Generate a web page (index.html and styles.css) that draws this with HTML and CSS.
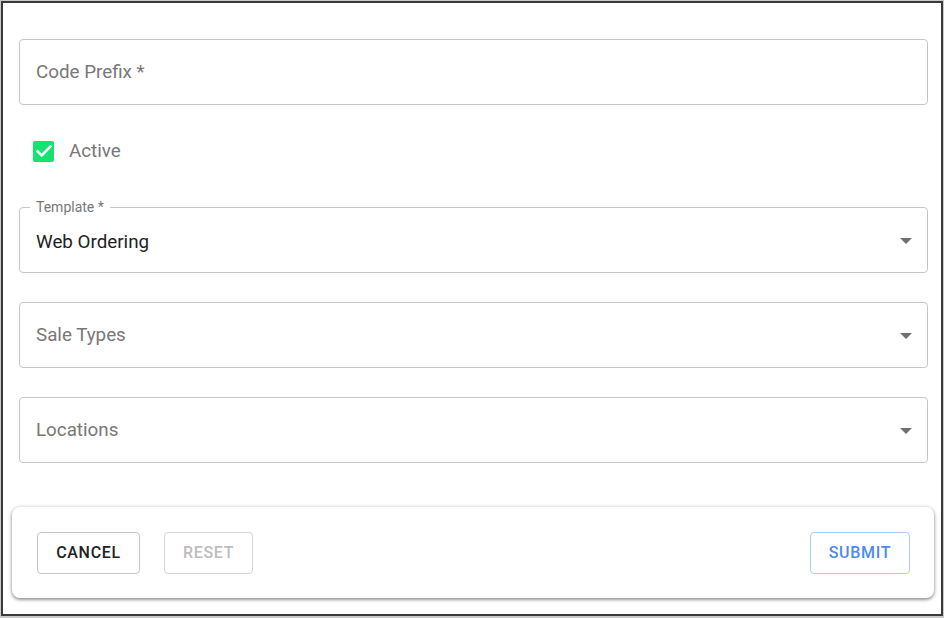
FILE: index.html
```html
<!DOCTYPE html>
<html>
<head>
<meta charset="utf-8">
<link rel="stylesheet" href="styles.css">
</head>
<body>
<div class="frame">
  <div class="panel">
    <div class="form">
      <div class="field">
        <span class="placeholder">Code Prefix *</span>
      </div>
      <label class="check-row">
        <span class="checkbox">
          <svg width="18" height="18" viewBox="0 0 24 24"><path d="M3.5 12.5l5.5 5.5L20.5 6" fill="none" stroke="#fff" stroke-width="3.4" stroke-linecap="square"/></svg>
        </span>
        <span class="check-label">Active</span>
      </label>
      <div class="field select filled">
        <span class="legend">Template *</span>
        <span class="value">Web Ordering</span>
        <span class="arrow"></span>
      </div>
      <div class="field select">
        <span class="placeholder">Sale Types</span>
        <span class="arrow"></span>
      </div>
      <div class="field select">
        <span class="placeholder">Locations</span>
        <span class="arrow"></span>
      </div>
    </div>
    <div class="actions">
      <div class="left-actions">
        <button class="btn btn-cancel">CANCEL</button>
        <button class="btn btn-reset">RESET</button>
      </div>
      <button class="btn btn-submit">SUBMIT</button>
    </div>
  </div>
</div>
</body>
</html>
```

FILE: styles.css
```css
* { box-sizing: border-box; }
html, body {
  margin: 0;
  padding: 0;
  background: #ffffff;
  font-family: Roboto, "Noto Sans", Arial, sans-serif;
}
.frame {
  width: 944px;
  height: 618px;
  border: 1px solid #c9c9c9;
  border-bottom-width: 2px;
}
.panel {
  height: 100%;
  border: 2px solid #3a3a3a;
  display: flex;
  flex-direction: column;
  padding: 8px 7px 16px 9px;
}
.form {
  flex: 1;
  display: flex;
  flex-direction: column;
  padding: 28px 6px 0 7px;
}
.field {
  position: relative;
  height: 66px;
  border: 1px solid #c6c6c6;
  border-radius: 4px;
  display: flex;
  align-items: center;
  padding: 0 16px;
  margin-bottom: 29px;
}
.placeholder {
  font-size: 18.8px;
  color: #777777;
  margin-top: -1px;
}
.value {
  font-size: 18.8px;
  color: #222222;
  margin-top: 3px;
}
.legend {
  position: absolute;
  top: -9px;
  left: 10px;
  padding: 0 6px;
  background: #fff;
  font-size: 14px;
  color: #777777;
  line-height: 16px;
}
.arrow {
  position: absolute;
  right: 15px;
  top: 50%;
  margin-top: -2px;
  width: 0;
  height: 0;
  border-left: 6px solid transparent;
  border-right: 6px solid transparent;
  border-top: 6px solid #707070;
}
.check-row {
  display: flex;
  align-items: center;
  gap: 15px;
  height: 94px;
  padding-left: 14px;
  margin-top: -29px;
  margin-bottom: 8px;
  padding-bottom: 2px;
}
.checkbox {
  width: 21px;
  height: 21px;
  background: #13e36f;
  border-radius: 2px;
  display: flex;
  align-items: center;
  justify-content: center;
}
.check-label {
  font-size: 18.8px;
  color: #777777;
}
.actions {
  height: 91px;
  border-radius: 8px;
  box-shadow: 0 1px 4px rgba(0,0,0,0.35), 0 2px 3px rgba(0,0,0,0.2);
  display: flex;
  align-items: center;
  justify-content: space-between;
  padding: 0 24px 0 25px;
  background: #fff;
}
.left-actions {
  display: flex;
  gap: 24px;
}
.btn {
  height: 42px;
  background: #fff;
  border: 1px solid #c6c6c6;
  border-radius: 4px;
  font-family: Roboto, "Noto Sans", Arial, sans-serif;
  font-size: 16px;
  font-weight: 500;
  letter-spacing: 0.7px;
  padding: 0;
}
.btn-cancel { color: #222222; width: 103px; }
.btn-reset { color: #bdbdbd; border-color: #d4d4d4; width: 89px; }
.btn-submit { color: #4a8af2; border-color: #a9cbf5; width: 100px; }
```
